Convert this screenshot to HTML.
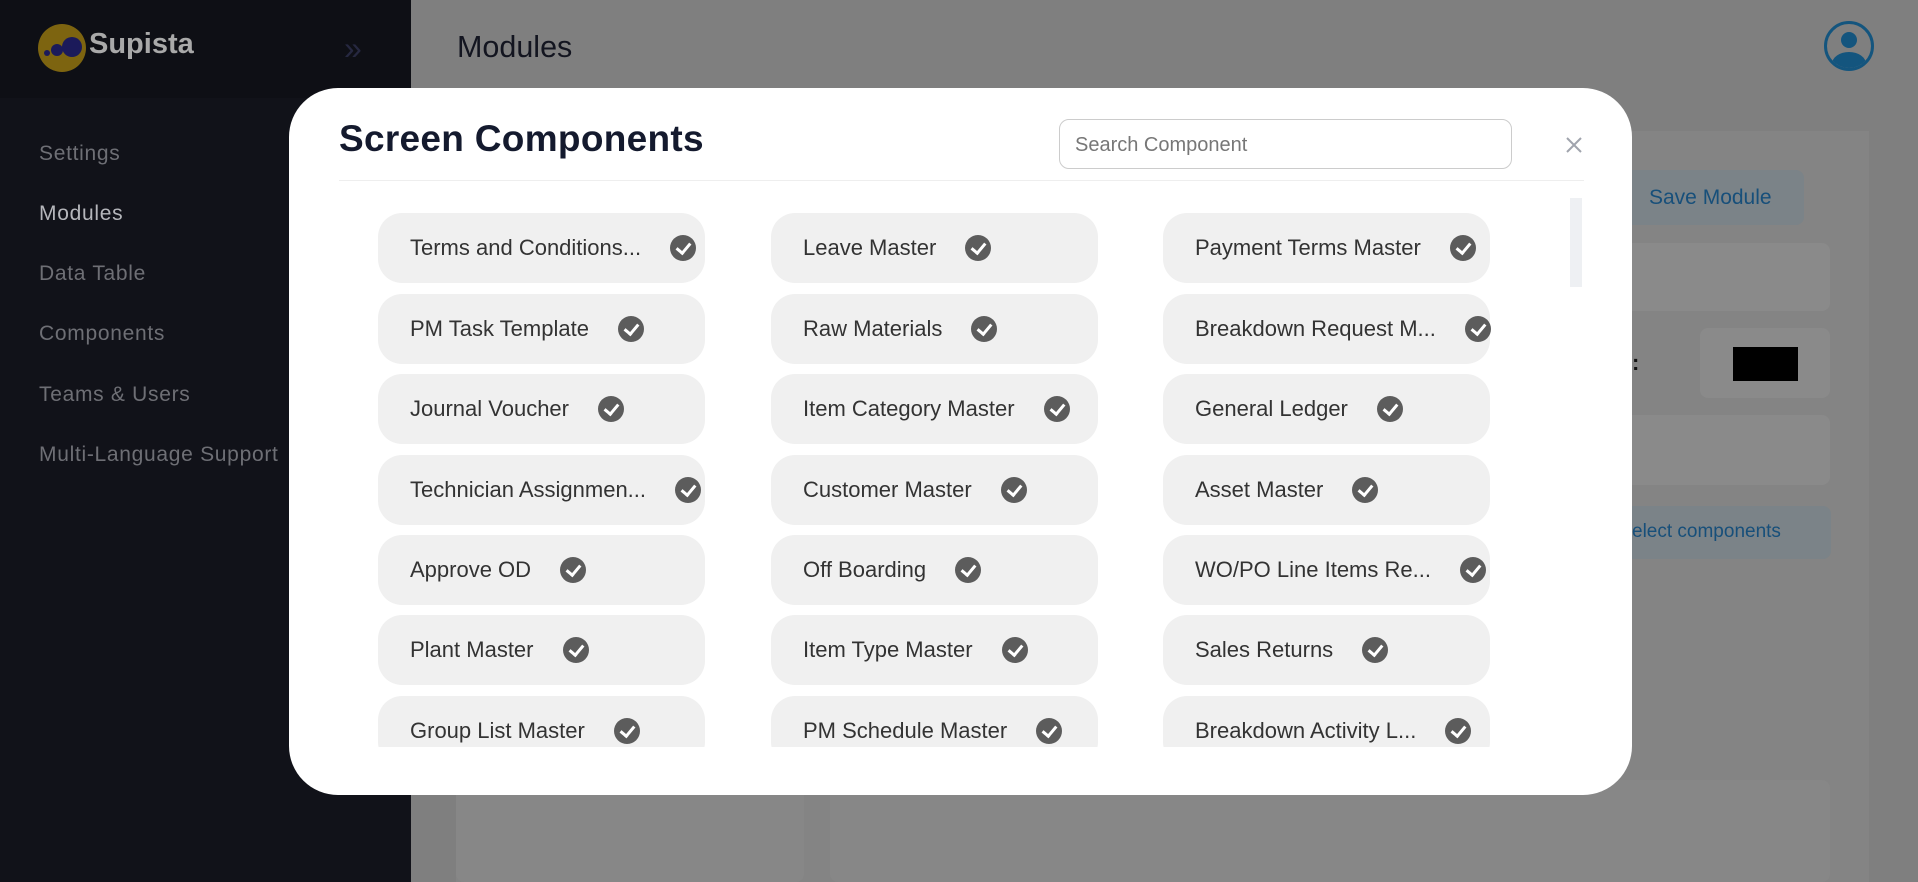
<!DOCTYPE html>
<html><head><meta charset="utf-8"><style>
*{box-sizing:border-box;margin:0;padding:0}
body{width:1918px;height:882px;overflow:hidden;position:relative;background:#7f7f7f;font-family:"Liberation Sans",sans-serif}
.sb{position:absolute;left:0;top:0;width:411px;height:882px;background:#111219}
.sb .top{position:absolute;left:0;top:0;width:411px;height:98px;background:#0e0f15}
.logo{position:absolute;left:38px;top:24px;width:48px;height:48px;border-radius:50%;background:#7d6410}
.logo i{position:absolute;border-radius:50%;background:#1b1a5a}
.brand{position:absolute;left:89px;top:28px;font-size:29px;font-weight:bold;color:#a9a9a9}
.chev{position:absolute;left:344px;top:30px;font-size:32px;color:#262840}
.mi{position:absolute;left:39px;font-size:21px;letter-spacing:0.7px;color:#6e6f75}
.hdr{position:absolute;left:457px;top:30px;font-size:30.5px;color:#131520}
.av{position:absolute;left:1824px;top:21px;width:50px;height:50px;border-radius:50%;border:3px solid #14557e;overflow:hidden;background:#7f7f7f}
.panel{position:absolute;left:456px;top:131px;width:1413px;height:751px;background:#848484}
.bx{position:absolute;background:#8a8a8a;border-radius:8px}
.modal{position:absolute;left:289px;top:88px;width:1343px;height:707px;background:#fff;border-radius:49px}
.title{position:absolute;left:339px;top:118px;font-size:37px;font-weight:bold;color:#141a2e;letter-spacing:.3px}
.search{position:absolute;left:1059px;top:119px;width:453px;height:50px;border:1px solid #ccc;border-radius:10px;font-size:20px;color:#777;padding:14px 15px}
.x{position:absolute;left:1565px;top:136px}
.div{position:absolute;left:339px;top:180px;width:1245px;height:1px;background:#eee}
.clip{position:absolute;left:339px;top:190px;width:1220px;height:557px;overflow:hidden}
.pill{position:absolute;width:327px;height:70px;background:#f0f0f0;border-radius:24px;font-size:22px;color:#333;padding-left:32px;display:flex;align-items:center;white-space:nowrap}
.ck{display:inline-block;width:26px;height:26px;border-radius:50%;background:#5c5c5c;margin-left:29px;position:relative;flex:none}
.ck:after{content:"";position:absolute;left:9px;top:5px;width:6px;height:11px;border:solid #fff;border-width:0 3px 3px 0;transform:rotate(40deg)}
.track{position:absolute;left:1570px;top:198px;width:12px;height:89px;background:#eef0f3}
</style></head><body>
<div class="sb"><div class="top"></div>
<div class="logo"><i style="left:6px;top:26px;width:6px;height:6px"></i><i style="left:13px;top:20px;width:12px;height:12px"></i><i style="left:24px;top:13px;width:20px;height:20px"></i></div>
<div class="brand">Supista</div><div class="chev">»</div>
<div class="mi" style="top:142px">Settings</div>
<div class="mi" style="top:202px;color:#b5b6bb">Modules</div>
<div class="mi" style="top:262px">Data Table</div>
<div class="mi" style="top:322px">Components</div>
<div class="mi" style="top:383px">Teams &amp; Users</div>
<div class="mi" style="top:443px">Multi-Language Support</div>
</div>
<div class="hdr">Modules</div>
<div class="av"><div style="position:absolute;left:14px;top:8px;width:16px;height:16px;border-radius:50%;background:#14557e"></div><div style="position:absolute;left:5px;top:28px;width:34px;height:24px;border-radius:50% 50% 0 0;background:#14557e"></div></div>
<div class="panel"></div>
<div class="bx" style="left:456px;top:780px;width:348px;height:102px;background:#878787"></div>
<div class="bx" style="left:830px;top:780px;width:1000px;height:102px;background:#878787"></div>
<div class="bx" style="left:1620px;top:170px;width:184px;height:55px;background:#7b8388;color:#174f7a;font-size:21px;padding:16px 0 0 29px">Save Module</div>
<div class="bx" style="left:1620px;top:243px;width:210px;height:68px"></div>
<div class="bx" style="left:1700px;top:328px;width:130px;height:70px"></div>
<div style="position:absolute;left:1610px;top:350px;font-size:22px;font-weight:bold;color:#111">or:</div>
<div style="position:absolute;left:1733px;top:347px;width:65px;height:34px;background:#000"></div>
<div class="bx" style="left:1620px;top:415px;width:210px;height:70px"></div>
<div class="bx" style="left:1620px;top:506px;width:211px;height:53px;background:#7b8388;color:#174f7a;font-size:19px;padding:15px 0 0 12px">elect components</div>
<div class="modal"></div>
<div class="title">Screen Components</div>
<div class="search">Search Component</div>
<svg class="x" width="18" height="18" viewBox="0 0 18 18"><path d="M2 2L16 16M16 2L2 16" stroke="#a0a4ad" stroke-width="2"/></svg>
<div class="div"></div>
<div class="track"></div>
<div class="clip">
<div class="pill" style="left:39px;top:23px">Terms and Conditions...<span class="ck"></span></div>
<div class="pill" style="left:432px;top:23px">Leave Master<span class="ck"></span></div>
<div class="pill" style="left:824px;top:23px">Payment Terms Master<span class="ck"></span></div>
<div class="pill" style="left:39px;top:104px">PM Task Template<span class="ck"></span></div>
<div class="pill" style="left:432px;top:104px">Raw Materials<span class="ck"></span></div>
<div class="pill" style="left:824px;top:104px;overflow:visible">Breakdown Request M...<span class="ck"></span></div>
<div class="pill" style="left:39px;top:184px">Journal Voucher<span class="ck"></span></div>
<div class="pill" style="left:432px;top:184px">Item Category Master<span class="ck"></span></div>
<div class="pill" style="left:824px;top:184px">General Ledger<span class="ck"></span></div>
<div class="pill" style="left:39px;top:265px">Technician Assignmen...<span class="ck"></span></div>
<div class="pill" style="left:432px;top:265px">Customer Master<span class="ck"></span></div>
<div class="pill" style="left:824px;top:265px">Asset Master<span class="ck"></span></div>
<div class="pill" style="left:39px;top:345px">Approve OD<span class="ck"></span></div>
<div class="pill" style="left:432px;top:345px">Off Boarding<span class="ck"></span></div>
<div class="pill" style="left:824px;top:345px">WO/PO Line Items Re...<span class="ck"></span></div>
<div class="pill" style="left:39px;top:425px">Plant Master<span class="ck"></span></div>
<div class="pill" style="left:432px;top:425px">Item Type Master<span class="ck"></span></div>
<div class="pill" style="left:824px;top:425px">Sales Returns<span class="ck"></span></div>
<div class="pill" style="left:39px;top:506px">Group List Master<span class="ck"></span></div>
<div class="pill" style="left:432px;top:506px">PM Schedule Master<span class="ck"></span></div>
<div class="pill" style="left:824px;top:506px">Breakdown Activity L...<span class="ck"></span></div>
</div>
</body></html>
